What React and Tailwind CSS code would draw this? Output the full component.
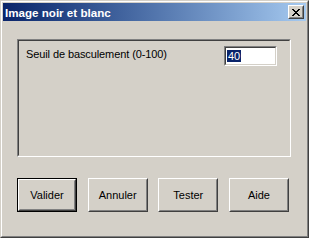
import React from "react";

const font = { fontFamily: '"Liberation Sans", Arial, sans-serif' };

const Bevel = ({ children, className = "" }) => (
  <div className={`border border-t-white border-l-white border-b-[#404040] border-r-[#404040] ${className}`}>
    <div className="h-full w-full border border-t-[#d4d0c8] border-l-[#d4d0c8] border-b-[#808080] border-r-[#808080] flex items-center justify-center">
      {children}
    </div>
  </div>
);

const Button = ({ label, isDefault }) =>
  isDefault ? (
    <div className="w-[60px] h-[34px] border border-black">
      <Bevel className="h-full w-full">
        <span className="text-[11px] text-black">{label}</span>
      </Bevel>
    </div>
  ) : (
    <Bevel className="w-[60px] h-[34px]">
      <span className="text-[11px] text-black">{label}</span>
    </Bevel>
  );

const App = () => {
  return (
    <div style={font} className="w-[309px] h-[238px] bg-[#d4d0c8] select-none">
      <div className="h-full w-full border border-t-[#d4d0c8] border-l-[#d4d0c8] border-b-[#404040] border-r-[#404040]">
        <div className="h-full w-full border border-t-white border-l-white border-b-[#808080] border-r-[#808080] p-px flex flex-col">
          {/* title bar */}
          <div className="h-[18px] flex items-center justify-between pl-[2px] pr-[2px] bg-gradient-to-r from-[#0a246a] to-[#a6caf0]">
            <span className="text-[11.6px] font-bold text-white leading-[13px]">Image noir et blanc</span>
            <Bevel className="w-[16px] h-[14px] bg-[#d4d0c8]">
              <svg width="8" height="7" viewBox="0 0 8 7" shapeRendering="crispEdges">
                <path d="M0 0h2v1h-2zM6 0h2v1h-2zM1 1h2v1h-2zM5 1h2v1h-2zM2 2h4v1h-4zM3 3h2v1h-2zM2 4h4v1h-4zM1 5h2v1h-2zM5 5h2v1h-2zM0 6h2v1h-2zM6 6h2v1h-2z" fill="#000" />
              </svg>
            </Bevel>
          </div>

          {/* client area */}
          <div className="flex-1 pl-[14px] pt-[18px]">
            <div className="w-[274px] h-[118px] border border-t-[#808080] border-l-[#808080] border-b-white border-r-white">
              <div className="h-full w-full border border-t-[#404040] border-l-[#404040] border-b-[#d4d0c8] border-r-[#d4d0c8] flex items-start justify-between pl-[7px] pr-[12px] pt-[5px]">
                <span className="text-[11px] leading-[13px] text-black mt-[2px] tracking-[-0.1px]">Seuil de basculement (0-100)</span>
                <div className="w-[53px] h-[20px] border border-t-[#808080] border-l-[#808080] border-b-white border-r-white">
                  <div className="h-full w-full border border-t-[#404040] border-l-[#404040] border-b-[#d4d0c8] border-r-[#d4d0c8] bg-white flex items-center pl-[1px]">
                    <span className="bg-[#0a246a] text-white text-[11px] leading-[12px] px-px">40</span>
                  </div>
                </div>
              </div>
            </div>

            <div className="w-[272px] mt-[21px] flex justify-between">
              <Button label="Valider" isDefault />
              <Button label="Annuler" />
              <Button label="Tester" />
              <Button label="Aide" />
            </div>
          </div>
        </div>
      </div>
    </div>
  );
};

export default App;
